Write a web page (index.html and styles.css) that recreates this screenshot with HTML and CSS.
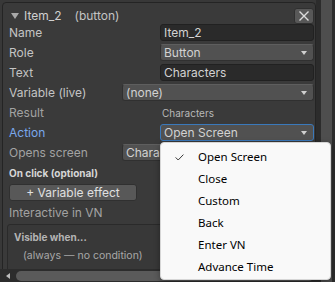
FILE: index.html
```html
<!DOCTYPE html>
<html lang="en">
<head>
    <meta charset="UTF-8">
    <meta name="viewport" content="width=device-width, initial-scale=1.0">
    <title>Inspector - Item_2</title>
    <link rel="stylesheet" href="styles.css">
</head>
<body>
    <!-- Inspector window -->
    <div class="window">
        <div class="viewport">
            <div class="box">
                <div class="header">
                    <span class="fold"></span>
                    <span class="title">Item_2</span>
                    <span class="kind">(button)</span>
                    <button class="close">
                        <svg width="12" height="12" viewBox="0 0 12 12">
                            <path d="M1.5 1.5 L10.5 10.5 M10.5 1.5 L1.5 10.5" stroke="#dcdcdc" stroke-width="1.4" fill="none"/>
                        </svg>
                    </button>
                </div>

                <div class="row">
                    <span class="label">Name</span>
                    <div class="field text-field">Item_2</div>
                </div>
                <div class="row">
                    <span class="label">Role</span>
                    <div class="field popup">Button<span class="arrow"></span></div>
                </div>
                <div class="row">
                    <span class="label">Text</span>
                    <div class="field text-field">Characters</div>
                </div>
                <div class="row wide">
                    <span class="label">Variable (live)</span>
                    <div class="field popup">(none)<span class="arrow"></span></div>
                </div>
                <div class="row">
                    <span class="label dim">Result</span>
                    <div class="value">Characters</div>
                </div>
                <div class="row">
                    <span class="label focus">Action</span>
                    <div class="field popup focused">Open Screen<span class="arrow"></span></div>
                </div>
                <div class="row wide">
                    <span class="label dim">Opens screen</span>
                    <div class="field popup">Characters<span class="arrow"></span></div>
                </div>

                <div class="section-title">On click (optional)</div>
                <button class="add-btn">+ Variable effect</button>

                <div class="row">
                    <span class="label dim">Interactive in VN</span>
                </div>

                <div class="cond-box">
                    <div class="cond-title">Visible when...</div>
                    <div class="cond-text">(always — no condition)</div>
                </div>
            </div>
        </div>
        <div class="vscroll"><div class="vthumb"></div></div>
        <div class="hscroll">
            <span class="harrow"></span>
            <div class="hthumb"></div>
        </div>
    </div>

    <!-- Open dropdown for Action -->
    <div class="menu">
        <div class="menu-item checked">
            <svg class="check" width="9" height="7" viewBox="0 0 9 7">
                <polyline points="0.6,3.4 3.2,6 8.4,0.6" stroke="#3a3a3a" stroke-width="1" fill="none"/>
            </svg>
            Open Screen
        </div>
        <div class="menu-item">Close</div>
        <div class="menu-item">Custom</div>
        <div class="menu-item">Back</div>
        <div class="menu-item">Enter VN</div>
        <div class="menu-item">Advance Time</div>
    </div>
</body>
</html>
```

FILE: styles.css
```css
body {
    margin: 0;
    width: 335px;
    height: 282px;
    overflow: hidden;
    background: #383838;
    font-family: 'Inter', 'Liberation Sans', sans-serif;
    font-size: 12px;
    color: #c4c4c4;
}

.window {
    display: grid;
    grid-template-columns: 316px 19px;
    grid-template-rows: 269px 13px;
    height: 100%;
}

.viewport {
    overflow: hidden;
    padding: 2px 0 0 2px;
}

.box {
    border: 1px solid #242424;
    border-radius: 4px;
    background: #3a3a3a;
    padding: 4px 1px 20px 6px;
}

.header {
    display: flex;
    align-items: center;
    height: 17px;
}

.fold {
    width: 0;
    height: 0;
    border-left: 4px solid transparent;
    border-right: 4px solid transparent;
    border-top: 6px solid #a8a8a8;
    margin: 0 5px 0 2px;
}

.title {
    color: #d0d0d0;
}

.kind {
    margin-left: 13px;
    color: #c4c4c4;
}

.close {
    margin-left: auto;
    width: 20px;
    height: 16px;
    padding: 0;
    border: 1px solid #303030;
    border-radius: 3px;
    background: #585858;
    display: flex;
    align-items: center;
    justify-content: center;
}

.row {
    display: flex;
    align-items: center;
    height: 17px;
    margin-top: 3px;
}

.header + .row {
    margin-top: 0;
}

.label {
    width: 151px;
    flex-shrink: 0;
    white-space: nowrap;
}

.row.wide .label {
    width: 113px;
}

.label.dim {
    color: #a2a2a2;
}

.label.focus {
    color: #79a8ec;
}

.field {
    flex: 1;
    height: 17px;
    box-sizing: border-box;
    border-radius: 3px;
    padding-left: 3px;
    line-height: 15px;
    color: #d2d2d2;
    position: relative;
    white-space: nowrap;
}

.text-field {
    background: #2a2a2a;
    border: 1px solid #212121;
}

.popup {
    background: #515151;
    border: 1px solid #303030;
    border-top-color: #5e5e5e;
}

.popup.focused {
    border: 1px solid #3a79bb;
}

.arrow {
    position: absolute;
    right: 6px;
    top: 6px;
    width: 0;
    height: 0;
    border-left: 3.5px solid transparent;
    border-right: 3.5px solid transparent;
    border-top: 4px solid #d0d0d0;
}

.value {
    padding-left: 2px;
    font-size: 10px;
    color: #b8b8b8;
}

.section-title {
    margin-top: 3px;
    height: 18px;
    line-height: 18px;
    font-size: 10px;
    font-weight: bold;
    color: #d6d6d6;
}

.add-btn {
    display: block;
    margin-top: 2px;
    width: 128px;
    height: 17px;
    padding: 0;
    border: 1px solid #303030;
    border-radius: 3px;
    background: #585858;
    color: #e0e0e0;
    font-family: inherit;
    font-size: 12px;
    line-height: 15px;
}

.cond-box {
    margin: 3px 0 0 -2px;
    border: 1px solid #2a2a2a;
    border-radius: 3px;
    background: #383838;
    padding: 3px 6px 10px;
}

.cond-title {
    height: 18px;
    line-height: 18px;
    font-size: 10px;
    font-weight: bold;
    color: #b4b4b4;
}

.cond-text {
    height: 20px;
    line-height: 20px;
    padding-left: 9px;
    font-size: 10.5px;
    color: #a8a8a8;
}

.vscroll {
    grid-row: 1 / 3;
    grid-column: 2;
    background: #2c2c2c;
    padding-left: 5px;
    padding-right: 3px;
}

.vthumb {
    height: 100%;
    background: #4e4e4e;
}

.hscroll {
    background: #2c2c2c;
    display: flex;
    align-items: center;
}

.harrow {
    width: 0;
    height: 0;
    border-top: 3.5px solid transparent;
    border-bottom: 3.5px solid transparent;
    border-right: 4px solid #bdbdbd;
    margin: 0 6px 0 6px;
}

.hthumb {
    flex: 1;
    height: 10px;
    border-radius: 5px;
    background: #5a5a5a;
    margin-right: 2px;
}

.menu {
    position: absolute;
    left: 160px;
    top: 142px;
    width: 171px;
    height: 138px;
    box-sizing: border-box;
    padding: 3px 0;
    background: #f9f9f9;
    border: 1px solid #d6d6d6;
    border-radius: 4px;
    box-shadow: 0 2px 6px rgba(0, 0, 0, 0.35);
    font-family: 'Noto Sans', 'Open Sans', sans-serif;
    font-size: 11.5px;
    color: #000;
}

.menu-item {
    position: relative;
    height: 22px;
    line-height: 22px;
    padding-left: 37px;
}

.check {
    position: absolute;
    left: 14px;
    top: 8px;
}
```
